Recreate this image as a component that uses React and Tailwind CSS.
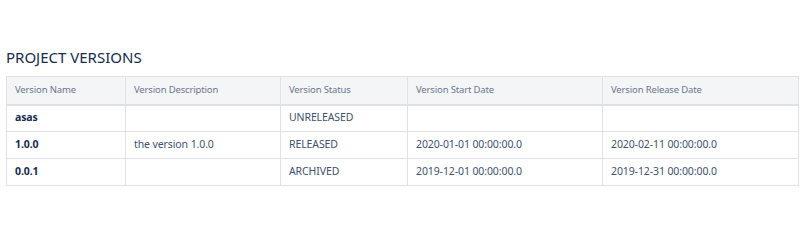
export default function App() {
  const rows = [
    { name: "asas", desc: "", status: "UNRELEASED", start: "", release: "" },
    { name: "1.0.0", desc: "the version 1.0.0", status: "RELEASED", start: "2020-01-01 00:00:00.0", release: "2020-02-11 00:00:00.0" },
    { name: "0.0.1", desc: "", status: "ARCHIVED", start: "2019-12-01 00:00:00.0", release: "2019-12-31 00:00:00.0" },
  ];

  return (
    <div className="w-[806px] h-[246px] bg-white pt-[47px] px-[6px]" style={{ fontFamily: '"Noto Sans", "Open Sans", sans-serif' }}>
      <h2 className="text-[15px] leading-[20px] text-[#172b4d] mb-[9px]">PROJECT VERSIONS</h2>
      <table className="w-[792px] border-collapse table-fixed text-[#172b4d]">
        <colgroup>
          <col className="w-[119px]" />
          <col className="w-[155px]" />
          <col className="w-[127px]" />
          <col className="w-[195px]" />
          <col className="w-[196px]" />
        </colgroup>
        <thead>
          <tr className="bg-[#f4f5f7] h-[28px] border-b-2 border-[#dfe1e6]">
            {["Version Name", "Version Description", "Version Status", "Version Start Date", "Version Release Date"].map((h) => (
              <th key={h} className="border border-[#dfe1e6] text-left font-normal text-[9.5px] tracking-[-0.15px] text-[#6b778c] px-[8px] py-0">
                {h}
              </th>
            ))}
          </tr>
        </thead>
        <tbody>
          {rows.map((r) => (
            <tr key={r.name} className="h-[27px] text-[10.5px] tracking-[-0.1px]">
              <td className="border border-[#dfe1e6] px-[8px] py-0 font-bold">{r.name}</td>
              <td className="border border-[#dfe1e6] px-[8px] py-0 text-[#42526e]">{r.desc}</td>
              <td className="border border-[#dfe1e6] px-[8px] py-0 text-[#42526e]">{r.status}</td>
              <td className="border border-[#dfe1e6] px-[8px] py-0 text-[#42526e]">{r.start}</td>
              <td className="border border-[#dfe1e6] px-[8px] py-0 text-[#42526e]">{r.release}</td>
            </tr>
          ))}
        </tbody>
      </table>
    </div>
  );
}
